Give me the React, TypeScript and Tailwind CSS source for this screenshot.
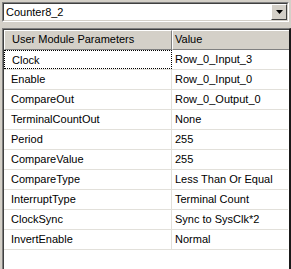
import React from 'react';

const params = [
  { name: 'Clock', value: 'Row_0_Input_3' },
  { name: 'Enable', value: 'Row_0_Input_0' },
  { name: 'CompareOut', value: 'Row_0_Output_0' },
  { name: 'TerminalCountOut', value: 'None' },
  { name: 'Period', value: '255' },
  { name: 'CompareValue', value: '255' },
  { name: 'CompareType', value: 'Less Than Or Equal' },
  { name: 'InterruptType', value: 'Terminal Count' },
  { name: 'ClockSync', value: 'Sync to SysClk*2' },
  { name: 'InvertEnable', value: 'Normal' },
];

export default function App() {
  return (
    <div
      className="w-[291px] h-[269px] overflow-hidden bg-[#d4d0c8] pt-[2px] pl-[2px] text-[11px] text-black"
      style={{ fontFamily: '"Liberation Sans", Arial, sans-serif' }}
    >
      {/* module combo box */}
      <div className="w-[287px] h-[20px] border-t border-l border-[#808080] border-b-white border-r-white border-b border-r">
        <div className="h-full flex border-t border-l border-[#404040] border-b-[#d4d0c8] border-r-[#d4d0c8] border-b border-r bg-white">
          <div className="flex-1 pl-[2px] leading-[16px] text-[11px]">Counter8_2</div>
          <div className="w-[16px] h-full flex items-center justify-center bg-[#d4d0c8] border-t border-l border-white border-b border-r border-b-[#404040] border-r-[#404040]">
            <svg width="7" height="4" viewBox="0 0 7 4">
              <path d="M0 0h7L3.5 4z" fill="#000" />
            </svg>
          </div>
        </div>
      </div>

      {/* parameter grid */}
      <div className="mt-[6px] w-[289px] h-[250px] border-t border-l border-[#808080] border-r-2 border-r-[#1a1a1a]">
        <div className="h-full border-t border-l border-[#404040] bg-white">
          <div className="flex h-[20px]">
            <div className="w-[168px] bg-[#d4d0c8] border-t border-l border-white border-b border-r border-b-[#808080] border-r-[#808080] pl-[7px] leading-[17px]">
              User Module Parameters
            </div>
            <div className="flex-1 bg-[#d4d0c8] border-t border-l border-white border-b border-b-[#808080] pl-[2px] leading-[17px]">
              Value
            </div>
          </div>
          {params.map((p, i) => (
            <div key={p.name} className="flex h-[20px] border-b border-[#e2e0da] mr-[1px]">
              <div
                className={`w-[168px] pl-[7px] leading-[18px] border-r border-[#e2e0da] ${
                  i === 0 ? 'border border-dotted border-black border-r-black' : ''
                }`}
              >
                {p.name}
              </div>
              <div className="flex-1 pl-[3px] leading-[18px]">{p.value}</div>
            </div>
          ))}
        </div>
      </div>
    </div>
  );
}
